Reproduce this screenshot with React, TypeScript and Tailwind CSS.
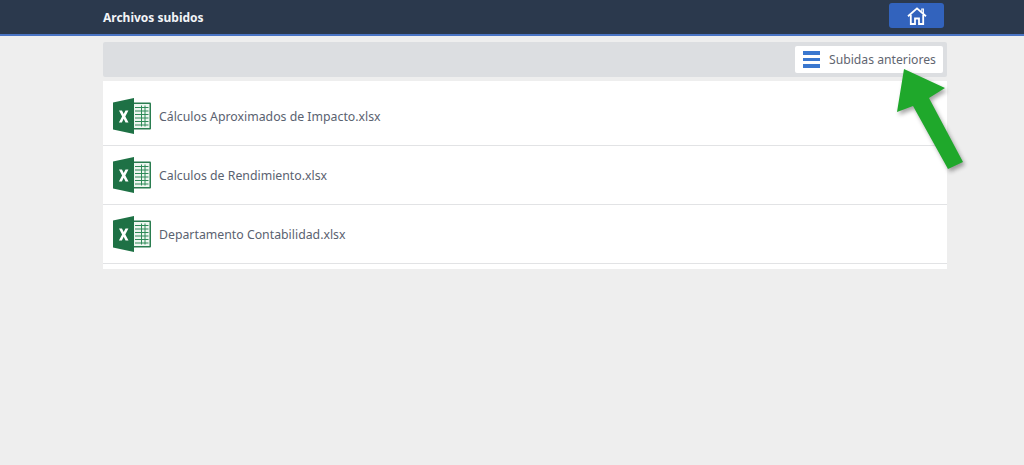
const files = [
  { name: 'Cálculos Aproximados de Impacto.xlsx', rowClass: 'h-[65px] pt-[6px]' },
  { name: 'Calculos de Rendimiento.xlsx', rowClass: 'h-[59px]' },
  { name: 'Departamento Contabilidad.xlsx', rowClass: 'h-[59px]' },
];

function ExcelIcon() {
  return (
    <svg width="38" height="36" viewBox="0 0 38 36" className="shrink-0">
      <rect x="19" y="4.5" width="19" height="27" rx="1" fill="#2a7d50" />
      <rect x="20.5" y="6" width="16" height="24" fill="#eef6f0" />
      <g stroke="#2f8a58" strokeWidth="1" fill="none">
        <path d="M22 9.5 H35.5 M22 13 H35.5 M22 16.5 H35.5 M22 20 H35.5 M22 23.5 H35.5 M22 27 H35.5" />
        <path d="M28.5 7.5 V28.5 M32 7.5 V28.5" />
      </g>
      <path d="M0 4.5 L21 0 V36 L0 31.5 Z" fill="#1e7145" />
      <path d="M6 12.5 H9 L10.7 16 L12.5 12.5 H15.4 L12.3 18.4 L15.5 24.5 H12.5 L10.7 20.8 L8.9 24.5 H5.9 L9.1 18.4 Z" fill="#ffffff" />
    </svg>
  );
}

function HomeIcon() {
  return (
    <svg width="20" height="18" viewBox="0 0 20 18" fill="none" stroke="#ffffff" strokeWidth="1.8" className="shrink-0">
      <path d="M1 9.3 L10 1.4 L19 9.3" strokeLinejoin="miter" />
      <path d="M14.8 4.8 V2 H16.4 V6.5" strokeWidth="1.1" />
      <path d="M3.8 7.8 V17 H8 V11.5 H12 V17 H16.2 V7.8" />
    </svg>
  );
}

function GreenArrow() {
  return (
    <svg width="84" height="110" viewBox="0 0 84 110" className="absolute left-[892px] top-[66px] drop-shadow-[2px_3px_2px_rgba(0,0,0,0.35)]">
      <path d="M12 3 L53 22 L37 32 L71 96 L56 103 L21 40 L5 46 Z" fill="#1fa82b" />
    </svg>
  );
}

export default function App() {
  return (
    <div className="relative min-h-[465px] overflow-hidden bg-[#eeeeee] font-['Noto_Sans',sans-serif]">
      <header className="h-[36px] border-b-2 border-[#4a74c4] bg-[#2b394d]">
        <div className="mx-[103px] flex h-[34px] w-[841px] items-center justify-between">
          <h1 className="pt-[1px] text-[12px] font-bold text-[#f2f4f7]">Archivos subidos</h1>
          <button className="mb-[3px] flex h-[25px] w-[55px] items-center justify-center rounded-[3px] bg-[#3263bd]">
            <HomeIcon />
          </button>
        </div>
      </header>

      <main className="mx-[103px] w-[844px] pt-[6px]">
        <div className="flex h-[35px] items-center justify-end rounded-[2px] bg-[#dcdee1] pr-[4px]">
          <button className="flex h-[27px] w-[148px] items-center rounded-[2px] bg-white pl-[8px]">
            <span className="flex w-[17px] flex-col gap-[3px]">
              <span className="h-[3.5px] bg-[#3a77cf]" />
              <span className="h-[3.5px] bg-[#3a77cf]" />
              <span className="h-[3.5px] bg-[#3a77cf]" />
            </span>
            <span className="ml-[9px] whitespace-nowrap pt-[1px] text-[12.2px] text-[#5f6570]">Subidas anteriores</span>
          </button>
        </div>

        <ul className="mt-[4px] h-[188px] bg-white">
          {files.map((file) => (
            <li key={file.name} className={`flex items-center gap-[8px] border-b border-[#e2e3e5] pl-[10px] ${file.rowClass}`}>
              <ExcelIcon />
              <span className="whitespace-nowrap pt-[2px] text-[12.3px] text-[#5a6270]">{file.name}</span>
            </li>
          ))}
        </ul>
      </main>

      <GreenArrow />
    </div>
  );
}
